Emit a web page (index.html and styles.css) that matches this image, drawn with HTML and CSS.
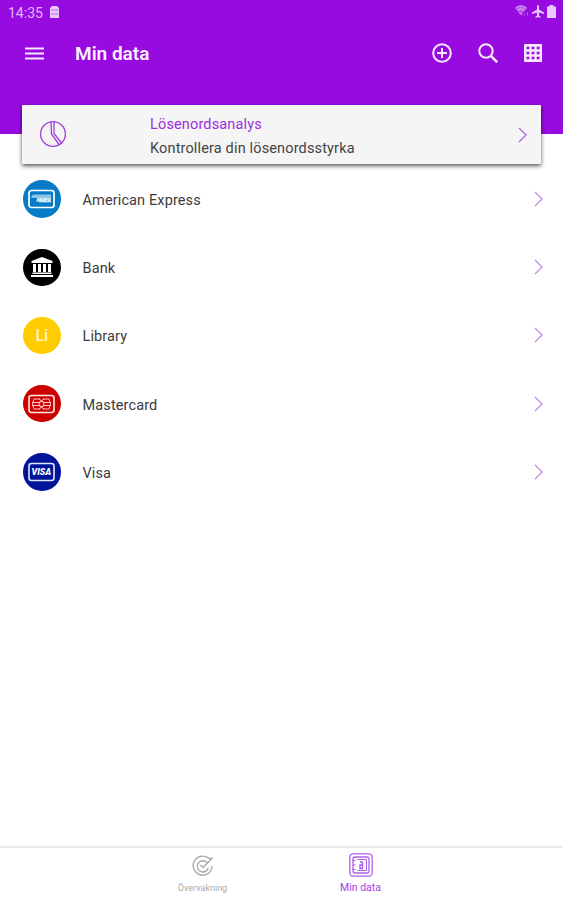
FILE: index.html
```html
<!DOCTYPE html>
<html lang="sv">
<head>
    <meta charset="UTF-8">
    <meta name="viewport" content="width=device-width, initial-scale=1.0">
    <title>Min data</title>
    <link rel="stylesheet" href="styles.css">
</head>
<body>
    <header class="header">
        <!-- Status bar -->
        <div class="status-bar">
            <span class="clock">14:35</span>
            <svg class="sim" width="9" height="12" viewBox="0 0 9 12"><path d="M2 0h5l2 2v10H0V2z" fill="#e9c8fb"/><path d="M1 4h7M1 8h7" stroke="#b867e8"/></svg>
            <div class="status-icons">
                <svg width="14" height="12" viewBox="0 0 14 12"><path d="M0 3Q6-1.500 12 3L9 7H7.500v3H6z" fill="#b75bea"/><path d="M.5 3Q6-1.500 11.500 3M2.500 5Q6 2.500 9.500 5M4.500 7.500L6 9.500" fill="none" stroke="#deb0f7"/><path d="M9.500 10.500v-2M12.500 10.500V7" stroke="#b65ce8"/></svg>
                <svg width="12" height="13" viewBox="0 0 12 13"><path d="M5 1q1-2 2 0v3.500l5 3V9L7 7.500v3l1.500 1V13L6 12l-2.500 1v-1.500l1.500-1v-3L0 9V7.500l5-3z" fill="#e9c8fb"/></svg>
                <svg width="9" height="13" viewBox="0 0 9 13"><path d="M2.500 0h4v1.500H9V13H0V1.500h2.500z" fill="#e9c8fb"/></svg>
            </div>
        </div>

        <!-- Toolbar -->
        <div class="toolbar">
            <svg width="19" height="13" viewBox="0 0 19 13"><path d="M0 1.500h19M0 6.500h19M0 11.500h19" stroke="#f8e9ff" stroke-width="2"/></svg>
            <h1 class="title">Min data</h1>
            <div class="actions">
                <svg width="20" height="20" viewBox="0 0 20 20" fill="none" stroke="#f8e9ff" stroke-width="2"><circle cx="10" cy="10" r="8.800"/><path d="M10 5v10M5 10h10"/></svg>
                <svg width="20" height="20" viewBox="0 0 20 20" fill="none" stroke="#f8e9ff" stroke-width="2"><circle cx="8" cy="8" r="6.700"/><path d="M12.800 12.800l6.400 6.400" stroke-width="2.600"/></svg>
                <svg width="18" height="18" viewBox="0 0 18 18"><rect width="18" height="18" rx="1" fill="#f8e9ff"/><path d="M2.500 4h13M2.500 9h13M2.500 14h13" stroke="#970be0" stroke-width="2.500" stroke-dasharray="2.800 2.300"/></svg>
            </div>
        </div>
    </header>

    <main class="content">
        <!-- Password analysis card -->
        <section class="card">
            <svg class="card-icon" width="28" height="28" viewBox="0 0 28 28" fill="none" stroke="#a43bdc" stroke-width="1.300"><circle cx="14" cy="14" r="12.400"/><path d="M12 1.700L12.500 14l7.500 10.500M15 1.700V13.500l7.500 9.500"/></svg>
            <div class="card-text">
                <p class="card-title">Lösenordsanalys</p>
                <p class="card-subtitle">Kontrollera din lösenordsstyrka</p>
            </div>
            <svg class="chevron chevron-dark" width="9" height="16" viewBox="0 0 9 16"><path d="M1 1l7 7-7 7"/></svg>
        </section>

        <ul class="list">
            <li class="item">
                <span class="badge amex">
                    <svg width="27" height="20" viewBox="0 0 27 20"><rect x="1" y="1.500" width="25" height="17" rx="2.500" fill="none" stroke="#fff" stroke-width="1.700"/><path d="M3.500 7l2-1.500h17.500v8H11L9 9H3.500z" fill="#8cc5e7"/><text x="8" y="12.500" class="logo" textLength="15">AMEX</text></svg>
                </span>
                <span class="name">American Express</span>
                <svg class="chevron" width="9" height="16" viewBox="0 0 9 16"><path d="M1 1l7 7-7 7"/></svg>
            </li>
            <li class="item">
                <span class="badge bank">
                    <svg width="24" height="22" viewBox="0 0 24 22"><path d="M12 1L1.500 5v2h21V5zM3 8h3v8H3zM8 8h3v8H8zM13 8h3v8h-3zM18 8h3v8h-3zM2.500 16.500h19V18h-19zM1 19h22v2H1z" fill="#fff"/></svg>
                </span>
                <span class="name">Bank</span>
                <svg class="chevron" width="9" height="16" viewBox="0 0 9 16"><path d="M1 1l7 7-7 7"/></svg>
            </li>
            <li class="item">
                <span class="badge library">Li</span>
                <span class="name">Library</span>
                <svg class="chevron" width="9" height="16" viewBox="0 0 9 16"><path d="M1 1l7 7-7 7"/></svg>
            </li>
            <li class="item">
                <span class="badge mastercard">
                    <svg width="27" height="20" viewBox="0 0 27 20" fill="none" stroke="#ffc4c4"><rect x="1" y="1.500" width="25" height="17" rx="2.500" stroke="#ffe6e6" stroke-width="1.600"/><path d="M12 5H6Q3 10 6 15h6M15 5h6q3 5 0 10h-6"/><circle cx="13.500" cy="10" r="2.500"/><path d="M4 8.500h7M4 11.500h7M16 8.500h7M16 11.500h7M11 5l5 3.500M16 5l-5 3.500M11 15l5-3.500M16 15l-5-3.500"/></svg>
                </span>
                <span class="name">Mastercard</span>
                <svg class="chevron" width="9" height="16" viewBox="0 0 9 16"><path d="M1 1l7 7-7 7"/></svg>
            </li>
            <li class="item">
                <span class="badge visa">
                    <svg width="27" height="20" viewBox="0 0 27 20"><rect x="1" y="1.500" width="25" height="17" rx="2.500" fill="none" stroke="#e3e6ff" stroke-width="1.600"/><text x="3.500" y="13.300" class="logo logo-visa" textLength="19.500" lengthAdjust="spacingAndGlyphs">VISA</text></svg>
                </span>
                <span class="name">Visa</span>
                <svg class="chevron" width="9" height="16" viewBox="0 0 9 16"><path d="M1 1l7 7-7 7"/></svg>
            </li>
        </ul>
    </main>

    <!-- Bottom navigation -->
    <nav class="bottom-nav">
        <div class="tab">
            <svg width="24" height="24" viewBox="0 0 24 24" fill="none" stroke="#aaa" stroke-width="1.400"><path d="M18.500 5A9.500 9.500 0 1 0 21.200 12M16 8.500A5.600 5.600 0 1 0 17.300 14M21.500 4L12 13.500 9.500 11M18.500 4.500L21.500 4"/></svg>
            <span>Övervakning</span>
        </div>
        <div class="tab active">
            <svg width="24" height="24" viewBox="0 0 24 24" fill="none" stroke="#b05fea" stroke-width="1.300"><rect x=".8" y=".8" width="22.400" height="22.400" rx="3.500"/><rect x="4" y="4" width="16" height="16" rx="2"/><path d="M8.500 6.500h9v11h-9M3.500 7.500h3M3.500 12h3M3.500 16.500h3" stroke-width="1"/><path d="M11 9.500q2.500-1.500 2.500.500v5.500M11 12h2.500v3.500H11z" stroke-width="1.500"/></svg>
            <span>Min data</span>
        </div>
    </nav>
</body>
</html>
```

FILE: styles.css
```css
* {
    box-sizing: border-box;
    margin: 0;
    padding: 0;
}

body {
    font-family: Roboto, "Liberation Sans", sans-serif;
    display: flex;
    flex-direction: column;
    height: 100vh;
    overflow: hidden;
    background-color: #fff;
}

svg {
    display: block;
    flex-shrink: 0;
}

.header {
    height: 134px;
    background-color: #970be0;
}

.status-bar {
    display: flex;
    align-items: center;
    height: 24px;
    padding: 0 7px 0 8px;
    color: #e3b6fa;
}

.clock {
    width: 42px;
    padding-top: 1px;
    font-size: 14px;
}

.status-icons {
    display: flex;
    align-items: center;
    gap: 3px;
    margin-left: auto;
    padding-bottom: 2px;
}

.toolbar {
    display: flex;
    align-items: center;
    height: 58px;
    padding: 0 21px 0 25px;
}

.title {
    margin-left: 31px;
    padding-top: 2px;
    font-size: 19px;
    font-weight: 600;
    line-height: 24px;
    color: #fbf0ff;
}

.actions {
    display: flex;
    align-items: center;
    gap: 26px;
    margin-left: auto;
}

.content {
    flex: 1;
}

.card {
    position: relative;
    display: flex;
    align-items: center;
    height: 59px;
    margin: -29px 22px 0;
    padding: 0 14px 0 17px;
    background-color: #f5f5f5;
    border-radius: 1px;
    box-shadow: 0 2px 4px rgba(0, 0, 0, 0.65);
}

.card-icon {
    margin-top: -1px;
}

.card-text {
    margin-left: 83px;
    padding-top: 4px;
    font-size: 14.5px;
    line-height: 24px;
    letter-spacing: 0.15px;
}

.card-title {
    color: #9c2edb;
}

.card-subtitle {
    color: #444;
}

.chevron {
    margin-left: auto;
    fill: none;
    stroke: #c18be9;
    stroke-width: 1.3;
}

.chevron-dark {
    stroke: #b065dc;
}

.list {
    list-style: none;
    padding-top: 1px;
}

.item {
    display: flex;
    align-items: center;
    height: 68.2px;
    padding: 0 20.5px 0 23px;
}

.badge {
    display: flex;
    align-items: center;
    justify-content: center;
    width: 37.5px;
    height: 37.5px;
    border-radius: 50%;
    color: #fff5cc;
    font-size: 16px;
    font-weight: 500;
}

.amex {
    background-color: #087bc6;
}

.bank {
    background-color: #000;
}

.library {
    background-color: #fc0;
}

.mastercard {
    background-color: #cd0000;
}

.visa {
    background-color: #001499;
}

.logo {
    fill: #e5f5ff;
    font-size: 6px;
    font-weight: 700;
}

.logo-visa {
    fill: #fff;
    font-size: 9px;
    font-style: italic;
    font-weight: 900;
}

.name {
    margin-left: 22px;
    padding-top: 3px;
    font-size: 14.5px;
    letter-spacing: 0.12px;
    color: #3c3c3c;
}

.bottom-nav {
    display: flex;
    justify-content: center;
    height: 54px;
    border-top: 2px solid #ebebeb;
}

.tab {
    display: flex;
    flex-direction: column;
    align-items: center;
    gap: 4px;
    width: 158px;
    padding-top: 6px;
    font-size: 9px;
    line-height: 12px;
    color: #aaa;
}

.active {
    gap: 5px;
    padding-top: 5px;
    font-size: 10.5px;
    color: #a33ee6;
}
```
